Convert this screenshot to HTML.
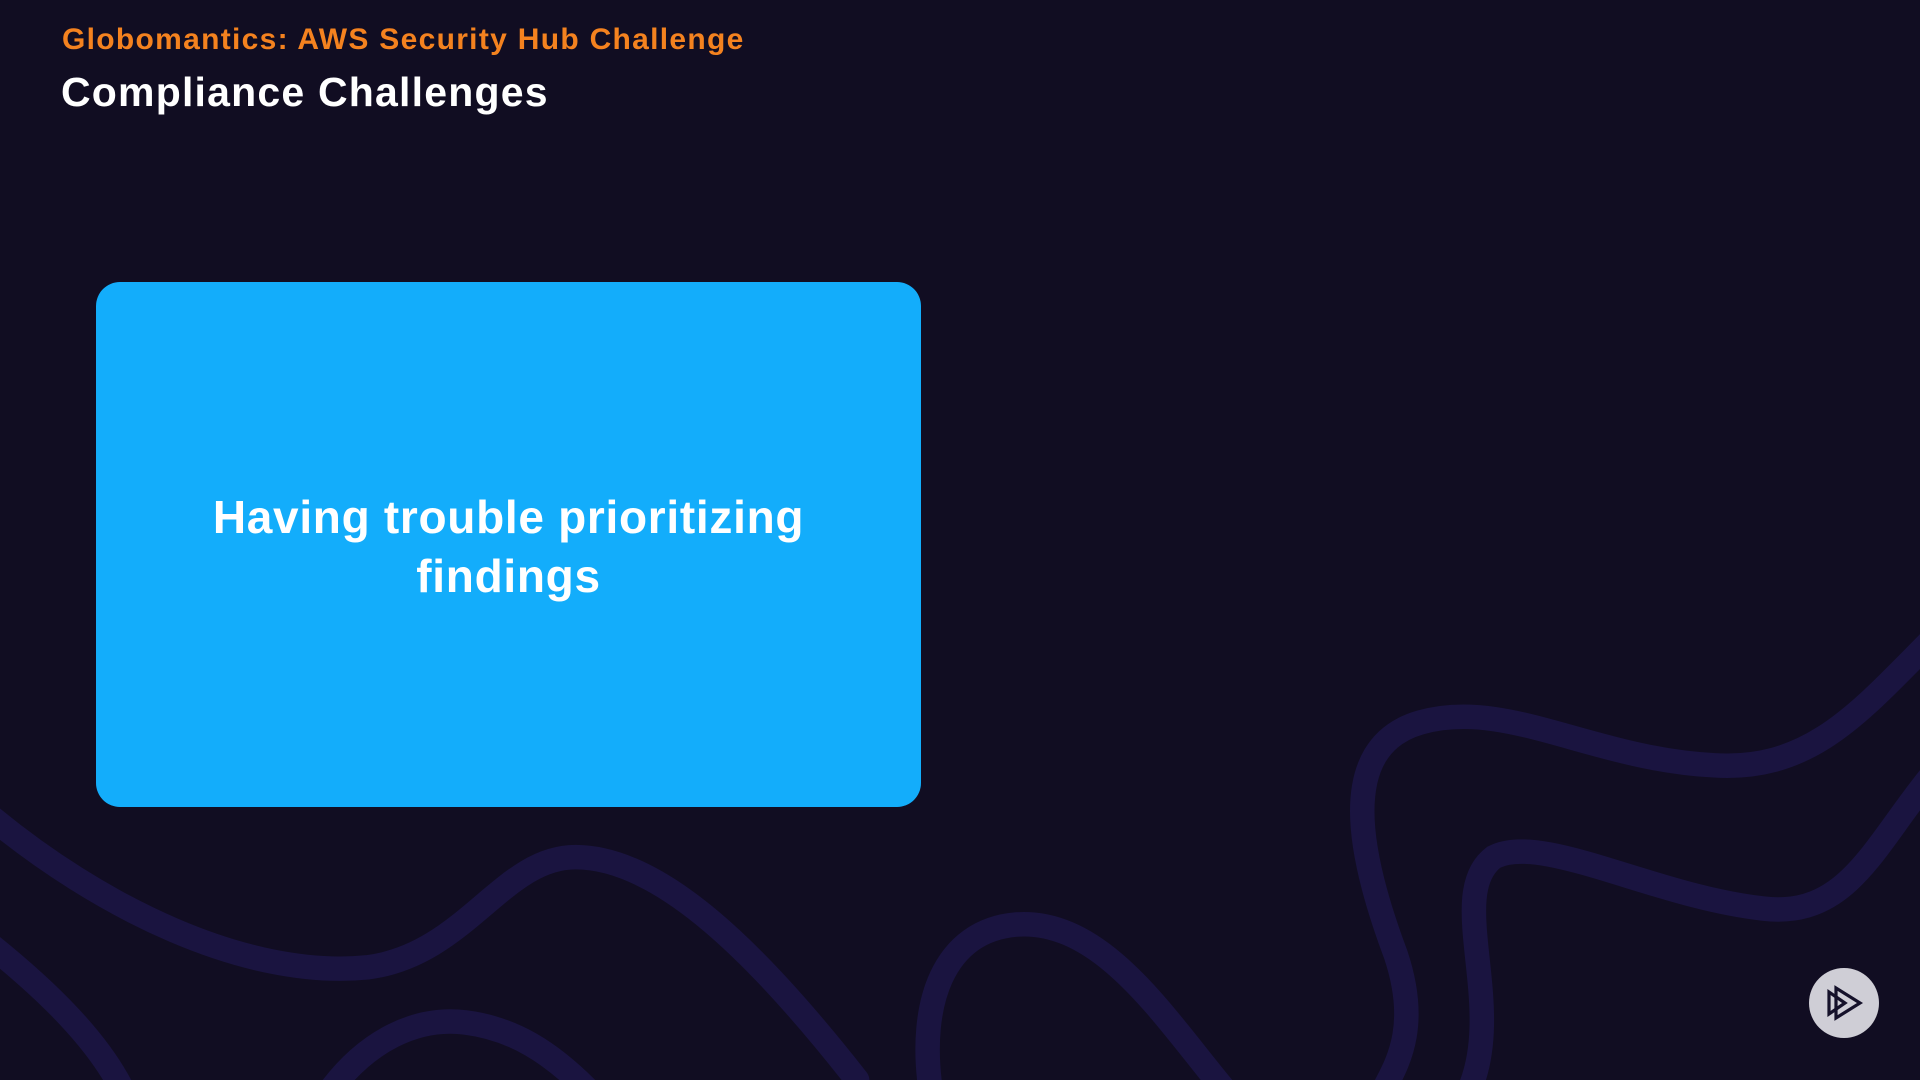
<!DOCTYPE html>
<html><head><meta charset="utf-8"><style>
html,body{margin:0;padding:0;}
body{width:1920px;height:1080px;background:#110d22;position:relative;overflow:hidden;font-family:"Liberation Sans",sans-serif;font-weight:bold;}
svg.bg{position:absolute;left:0;top:0;}
.t1{position:absolute;left:62px;top:23px;font-size:30px;color:#f4821f;letter-spacing:1.3px;}
.t2{position:absolute;left:61px;top:69px;font-size:41px;color:#fff;letter-spacing:1.2px;}
.box{position:absolute;left:96px;top:282px;width:825px;height:525px;background:#13adfb;border-radius:24px;display:flex;align-items:center;justify-content:center;text-align:center;color:#fff;font-size:46px;line-height:59px;letter-spacing:0.7px;padding-top:4px;box-sizing:border-box;}
.play{position:absolute;left:1809px;top:968px;width:70px;height:70px;border-radius:50%;background:#cfced6;}
</style></head><body>
<svg class="bg" width="1920" height="1080" viewBox="0 0 1568 882" preserveAspectRatio="none">
<g fill="none" stroke="#1a1440" stroke-width="20" stroke-linecap="round">
<path d="M-10,665 C80,740 200,800 300,790 C380,780 410,700 470,700 C540,700 620,780 700,882"/>
<path d="M-10,770 C40,810 80,850 100,890"/>
<path d="M270,890 C300,850 340,830 380,835 C420,840 450,860 480,890"/>
<path d="M760,890 C750,820 770,760 830,755 C900,750 950,830 1000,890"/>
<path d="M1580,520 C1520,580 1480,630 1400,625 C1300,620 1230,570 1160,590 C1090,610 1110,700 1140,780 C1160,840 1140,870 1130,890"/>
<path d="M1580,630 C1530,690 1510,750 1440,742 C1350,732 1260,680 1220,700 C1180,730 1230,820 1200,890"/>
</g></svg>
<div class="t1">Globomantics: AWS Security Hub Challenge</div>
<div class="t2">Compliance Challenges</div>
<div class="box">Having trouble prioritizing<br>findings</div>
<div class="play"><svg width="70" height="70" viewBox="0 0 70 70"><g fill="none" stroke="#15112a" stroke-width="3.2" stroke-linejoin="miter"><path d="M20,24 L20,46 L36,35 Z"/><path d="M27,20 L27,50 L51,35 Z"/></g></svg></div>
</body></html>
